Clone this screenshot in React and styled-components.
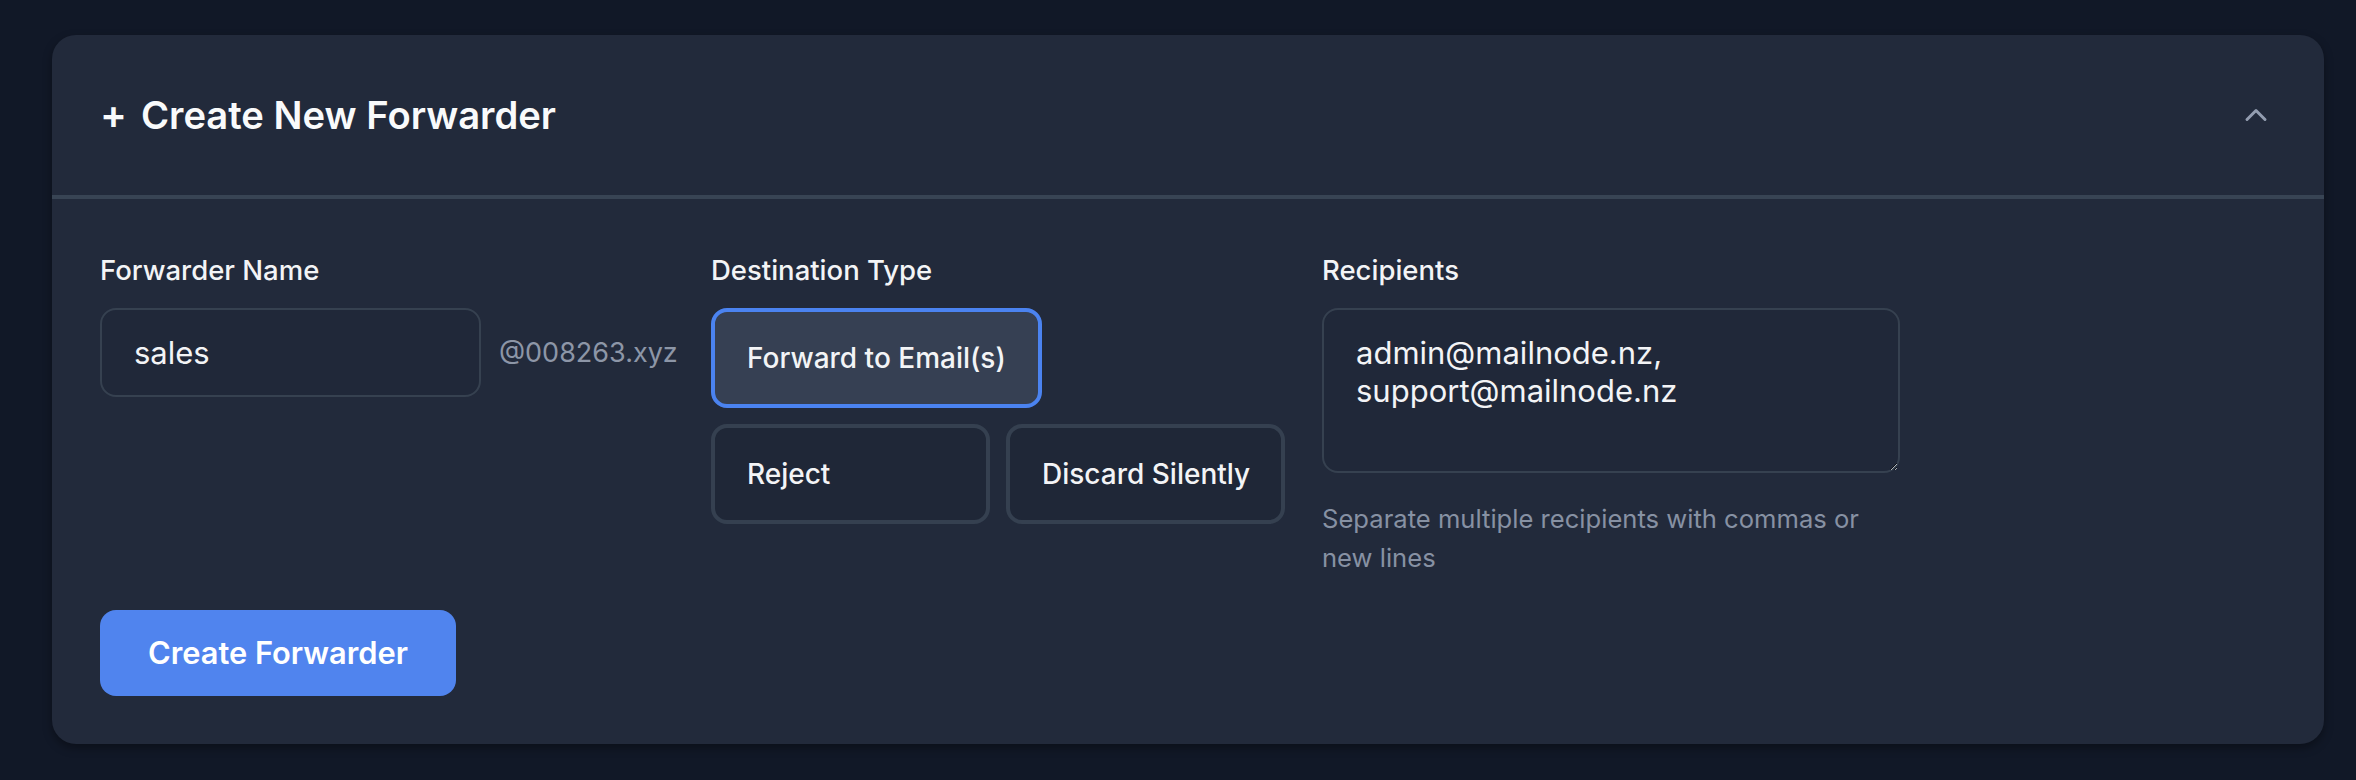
import React from "react";
import styled, { createGlobalStyle } from "styled-components";
import { ChevronUp } from "lucide-react";

const GlobalStyle = createGlobalStyle`
  * { box-sizing: border-box; }
  html, body {
    margin: 0;
    padding: 0;
    background: #111827;
    font-family: Inter, "Noto Sans", "Liberation Sans", sans-serif;
    -webkit-font-smoothing: antialiased;
  }
`;

const Page = styled.div`
  min-height: 780px;
  padding: 35px 32px 36px 52px;
  background: #111827;
`;

const Card = styled.section`
  background: #222a3b;
  border-radius: 24px;
  box-shadow: 0 4px 10px rgba(0, 0, 0, 0.35);
  overflow: hidden;
`;

const Header = styled.header`
  display: flex;
  align-items: center;
  justify-content: space-between;
  height: 164px;
  padding: 0 50px 0 48px;
  border-bottom: 4px solid #384454;
`;

const Title = styled.h2`
  display: flex;
  align-items: center;
  gap: 14px;
  margin: 0;
  font-size: 38.2px;
  line-height: 56px;
  font-weight: 600;
  color: #f9fafb;
`;

const PlusMark = styled.span`
  font-size: 40px;
  font-weight: 600;
`;

const ToggleButton = styled.button`
  display: flex;
  align-items: center;
  justify-content: center;
  padding: 0;
  border: none;
  background: transparent;
  color: #939db0;
  cursor: pointer;
`;

const Body = styled.div`
  padding: 51px 48px 48px;
`;

const FieldGrid = styled.div`
  display: grid;
  grid-template-columns: repeat(3, 578px);
  column-gap: 33px;
  align-items: start;
  margin-bottom: 33px;
`;

const Field = styled.div`
  display: flex;
  flex-direction: column;
`;

const Label = styled.label`
  font-size: 27.5px;
  line-height: 40px;
  font-weight: 500;
  color: #f3f4f6;
  margin-bottom: 18px;
`;

const InputRow = styled.div`
  display: flex;
  align-items: center;
  gap: 18px;
`;

const TextInput = styled.input`
  width: 381px;
  height: 89px;
  padding: 0 32px;
  border: 2px solid #364150;
  border-radius: 16px;
  background: #202839;
  color: #f3f4f6;
  font-family: inherit;
  font-size: 31px;
  line-height: 40px;
  outline: none;
`;

const Suffix = styled.span`
  font-size: 27px;
  line-height: 40px;
  color: #8d96a7;
`;

const Options = styled.div`
  display: flex;
  flex-direction: column;
  align-items: flex-start;
  gap: 16px;
`;

const OptionGrid = styled.div`
  display: grid;
  grid-template-columns: repeat(2, 279px);
  gap: 16px;
`;

const OptionButton = styled.button`
  padding: 26px 32px;
  border: 4px solid ${(p) => (p.$selected ? "#4b83f0" : "#354050")};
  border-radius: 16px;
  background: ${(p) => (p.$selected ? "#364053" : "#1f2737")};
  color: #f3f4f6;
  font-family: inherit;
  font-size: 28px;
  line-height: 40px;
  font-weight: 500;
  text-align: left;
  white-space: nowrap;
  cursor: pointer;
`;

const TextArea = styled.textarea`
  width: 100%;
  height: 165px;
  padding: 24px 32px;
  border: 2px solid #364150;
  border-radius: 16px;
  background: #202839;
  color: #f3f4f6;
  font-family: inherit;
  font-size: 31px;
  line-height: 38px;
  outline: none;
  overflow: hidden;
`;

const Hint = styled.p`
  margin: 26px 0 0;
  font-size: 25.6px;
  line-height: 39px;
  color: #8791a3;
`;

const CreateButton = styled.button`
  padding: 19px 48px;
  border: none;
  border-radius: 16px;
  background: #5084ee;
  color: #ffffff;
  font-family: inherit;
  font-size: 30.8px;
  line-height: 48px;
  font-weight: 600;
  cursor: pointer;
`;

const destinations = [
  { id: "forward", label: "Forward to Email(s)" },
  { id: "reject", label: "Reject" },
  { id: "discard", label: "Discard Silently" },
];

export default function App() {
  const [selected, setSelected] = React.useState("forward");
  const [first, ...rest] = destinations;

  return (
    <>
      <GlobalStyle />
      <Page>
        <Card>
          <Header>
            <Title>
              <PlusMark>+</PlusMark>
              Create New Forwarder
            </Title>
            <ToggleButton aria-label="Collapse">
              <ChevronUp size={36} strokeWidth={2} />
            </ToggleButton>
          </Header>
          <Body>
            <FieldGrid>
              <Field>
                <Label htmlFor="fwd-name">Forwarder Name</Label>
                <InputRow>
                  <TextInput id="fwd-name" defaultValue="sales" />
                  <Suffix>@008263.xyz</Suffix>
                </InputRow>
              </Field>
              <Field>
                <Label>Destination Type</Label>
                <Options>
                  <OptionButton
                    $selected={selected === first.id}
                    onClick={() => setSelected(first.id)}
                  >
                    {first.label}
                  </OptionButton>
                  <OptionGrid>
                    {rest.map((d) => (
                      <OptionButton
                        key={d.id}
                        $selected={selected === d.id}
                        onClick={() => setSelected(d.id)}
                      >
                        {d.label}
                      </OptionButton>
                    ))}
                  </OptionGrid>
                </Options>
              </Field>
              <Field>
                <Label htmlFor="recipients">Recipients</Label>
                <TextArea
                  id="recipients"
                  defaultValue={"admin@mailnode.nz,\nsupport@mailnode.nz"}
                />
                <Hint>Separate multiple recipients with commas or new lines</Hint>
              </Field>
            </FieldGrid>
            <CreateButton>Create Forwarder</CreateButton>
          </Body>
        </Card>
      </Page>
    </>
  );
}
